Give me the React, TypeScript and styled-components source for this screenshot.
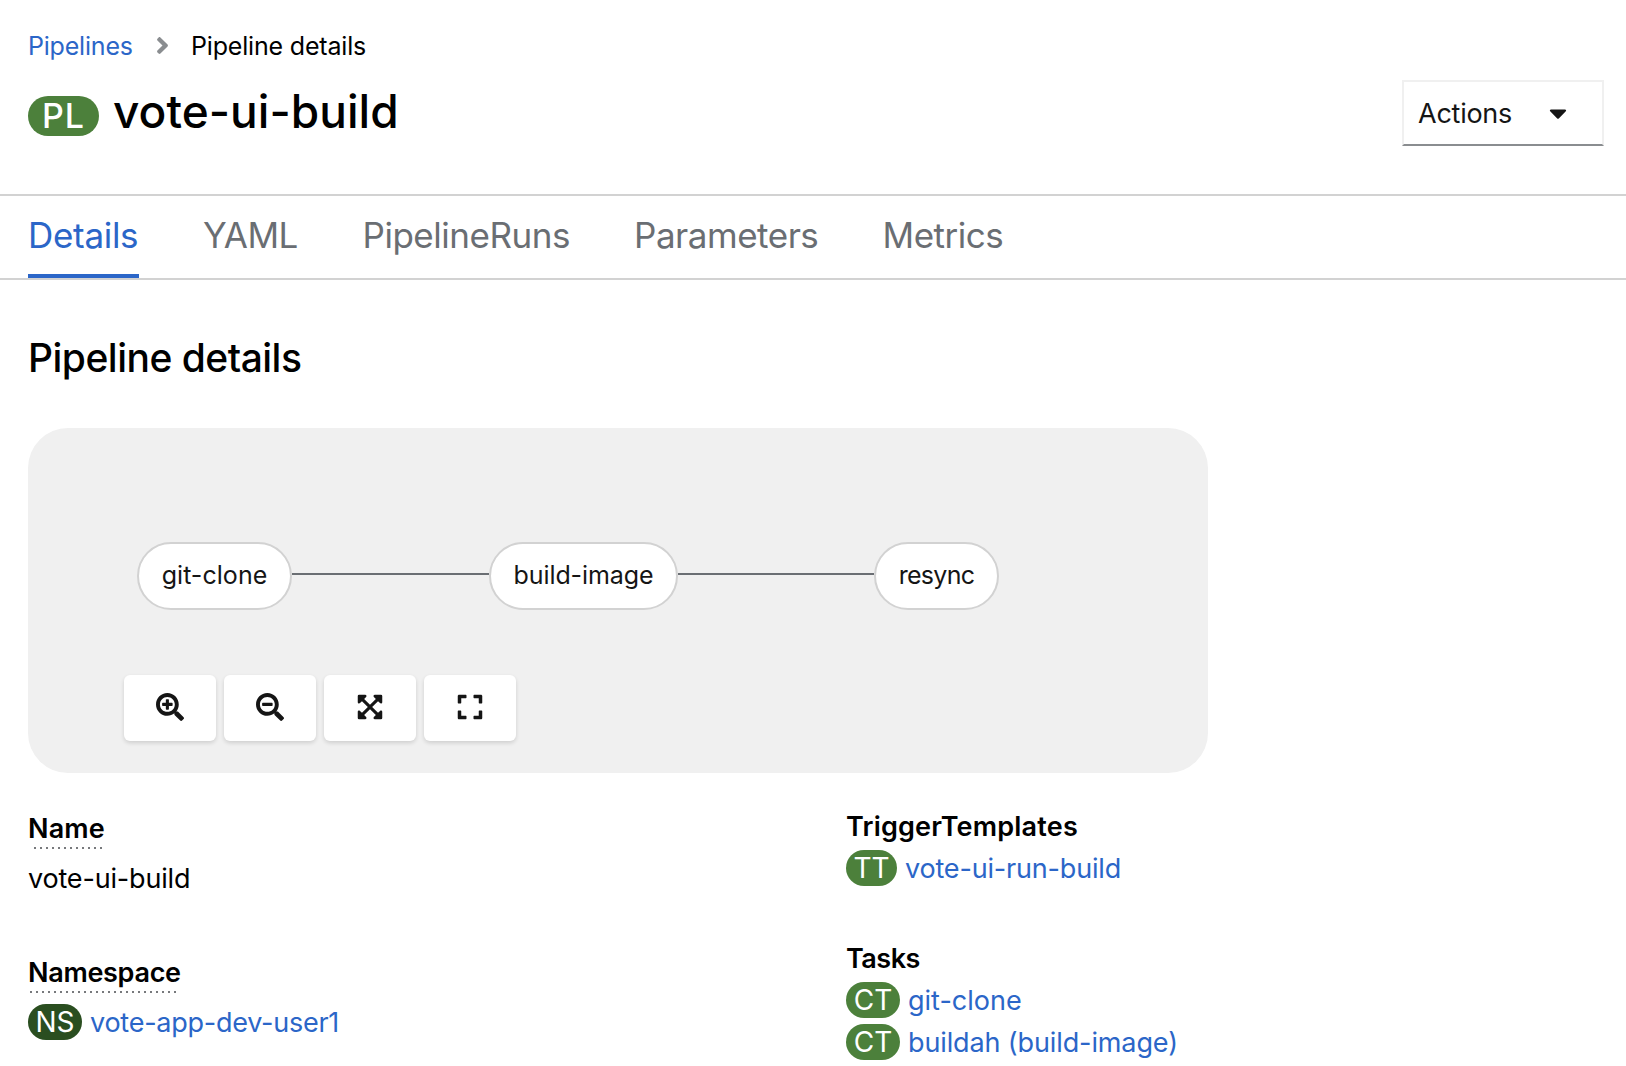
import React from "react";
import styled, { createGlobalStyle } from "styled-components";
import {
  FaAngleRight,
  FaCaretDown,
  FaExpand,
  FaExpandArrowsAlt,
  FaSearchMinus,
  FaSearchPlus,
} from "react-icons/fa";

const color = {
  link: "#2b66c8",
  text: "#000000",
  dark: "#151515",
  muted: "#6a6e73",
  line: "#d2d2d2",
  panel: "#f0f0f0",
  green: "#4c803b",
  darkGreen: "#2a4e20",
};

const GlobalStyle = createGlobalStyle`
  *, *::before, *::after { box-sizing: border-box; }
  body {
    margin: 0;
    background: #fff;
    color: ${color.text};
    font-family: Inter, "Liberation Sans", sans-serif;
    overflow: hidden;
  }
  h1, h2, dl, dt, dd, ol { margin: 0; padding: 0; }
  a { text-decoration: none; }
`;

const Page = styled.main`
  display: flex;
  flex-direction: column;
  width: 1626px;
  min-height: 1066px;
`;

const Header = styled.header`
  display: flex;
  justify-content: space-between;
  align-items: flex-start;
  height: 194px;
  padding: 27px 22px 0 28px;
`;

const HeaderMain = styled.div`
  display: flex;
  flex-direction: column;
  gap: 17px;
`;

const Breadcrumb = styled.nav`
  display: flex;
  height: 38px;
  font-size: 25px;
  line-height: 38px;
  white-space: nowrap;
`;

const BreadcrumbLink = styled.a`
  width: 105px;
  color: ${color.link};
  letter-spacing: -0.2px;
`;

const BreadcrumbDivider = styled.span`
  display: flex;
  align-items: center;
  margin: 0 15px 2px 16px;
  color: #8a8d90;
`;

const BreadcrumbCurrent = styled.span`
  letter-spacing: -0.18px;
`;

const TitleRow = styled.div`
  display: flex;
  align-items: flex-start;
  gap: 14px;
`;

const TitleBadge = styled.span`
  width: 71px;
  height: 40px;
  margin-top: 14px;
  padding-left: 14px;
  border-radius: 20px;
  background: ${color.green};
  color: #fff;
  font-size: 34px;
  font-weight: 540;
  line-height: 40px;
  letter-spacing: 1px;
`;

const Title = styled.h1`
  font-size: 46px;
  font-weight: 540;
  line-height: 58px;
  letter-spacing: 0.05px;
  white-space: nowrap;
`;

const ActionsButton = styled.button`
  display: flex;
  justify-content: space-between;
  align-items: center;
  width: 202px;
  height: 66px;
  margin-top: 53px;
  padding: 0 30px 0 14px;
  border: 2px solid #f0f0f0;
  border-bottom-color: #8a8d90;
  background: #fff;
  color: ${color.dark};
  font-family: inherit;
  font-size: 27px;
  letter-spacing: -0.25px;
`;

const Tabs = styled.nav`
  display: flex;
  gap: 64px;
  height: 86px;
  padding-left: 28px;
  border-top: 2px solid ${color.line};
  border-bottom: 2px solid ${color.line};
`;

const Tab = styled.a<{ $active?: boolean; $width: number }>`
  width: ${(p) => p.$width}px;
  height: 82px;
  border-bottom: 4px solid ${(p) => (p.$active ? color.link : "transparent")};
  color: ${(p) => (p.$active ? color.link : color.muted)};
  font-size: 35px;
  line-height: 78px;
  letter-spacing: ${(p) => (p.$active ? -0.3 : -0.47)}px;
  white-space: nowrap;
`;

const Section = styled.section`
  display: flex;
  flex-direction: column;
  padding: 54px 28px 0;
`;

const SectionTitle = styled.h2`
  font-size: 39px;
  font-weight: 540;
  line-height: 48px;
  letter-spacing: -0.51px;
`;

const Graph = styled.div`
  display: flex;
  flex-direction: column;
  gap: 65px;
  width: 1180px;
  height: 345px;
  margin-top: 46px;
  padding-top: 114px;
  border-radius: 40px;
  background: ${color.panel};
`;

const Nodes = styled.div`
  display: flex;
  padding-left: 109px;
`;

const Node = styled.div<{ $width: number; $spacing?: number }>`
  width: ${(p) => p.$width}px;
  height: 68px;
  border: 2px solid ${color.line};
  border-radius: 34px;
  background: #fff;
  color: ${color.dark};
  font-size: 25px;
  line-height: 62px;
  letter-spacing: ${(p) => p.$spacing ?? 0}px;
  text-align: center;
`;

const Edge = styled.div<{ $width: number }>`
  width: ${(p) => p.$width}px;
  height: 2px;
  margin-top: 31px;
  background: ${color.muted};
`;

const Toolbar = styled.div`
  display: flex;
  gap: 8px;
  padding-left: 96px;
`;

const ToolButton = styled.button`
  display: flex;
  justify-content: center;
  align-items: center;
  width: 92px;
  height: 66px;
  padding: 0 0 2px;
  border: 0;
  border-radius: 6px;
  background: #fff;
  box-shadow: 0 2px 4px rgba(3, 3, 3, 0.14);
  color: ${color.dark};
`;

const Details = styled.div`
  display: grid;
  grid-template-columns: 818px 1fr;
`;

const Column = styled.dl<{ $top: number; $gap: number }>`
  display: flex;
  flex-direction: column;
  gap: ${(p) => p.$gap}px;
  padding-top: ${(p) => p.$top}px;
`;

const Group = styled.div`
  display: flex;
  flex-direction: column;
  align-items: flex-start;
`;

const Term = styled.dt<{ $spacing: number }>`
  height: 41px;
  font-size: 27px;
  font-weight: 600;
  line-height: 42px;
  letter-spacing: ${(p) => p.$spacing}px;
`;

const HelpTerm = styled(Term)<{ $offset: number; $dots: number }>`
  margin-bottom: 8px;
  background: repeating-linear-gradient(
      to right,
      #77797c 0 2px,
      transparent 2px 6px
    )
    ${(p) => p.$offset}px 100% / ${(p) => p.$dots * 6}px 2px no-repeat;
`;

const Item = styled.dd<{ $spacing?: number }>`
  display: flex;
  align-items: center;
  gap: 8px;
  height: 42px;
  font-size: 27px;
  line-height: 44px;
  letter-spacing: ${(p) => p.$spacing ?? 0}px;
  white-space: nowrap;
`;

const ItemText = styled.span`
  height: 42px;
`;

const ItemLink = styled.a`
  height: 42px;
  color: ${color.link};
`;

const KindBadge = styled.span<{ $width: number; $dark?: boolean }>`
  width: ${(p) => p.$width}px;
  height: 36px;
  border-radius: 18px;
  background: ${(p) => (p.$dark ? color.darkGreen : color.green)};
  color: #fff;
  font-size: 28px;
  line-height: 37px;
  letter-spacing: 0;
  text-align: center;
`;

const tabs = [
  { label: "Details", width: 111, active: true },
  { label: "YAML", width: 95.5 },
  { label: "PipelineRuns", width: 207.5 },
  { label: "Parameters", width: 184.5 },
  { label: "Metrics", width: 120 },
];

const tools = [
  { label: "Zoom in", Icon: FaSearchPlus },
  { label: "Zoom out", Icon: FaSearchMinus },
  { label: "Fit to screen", Icon: FaExpandArrowsAlt },
  { label: "Reset view", Icon: FaExpand },
];

export default function App() {
  return (
    <Page>
      <GlobalStyle />
      <Header>
        <HeaderMain>
          <Breadcrumb>
            <BreadcrumbLink>Pipelines</BreadcrumbLink>
            <BreadcrumbDivider>
              <FaAngleRight size={27} />
            </BreadcrumbDivider>
            <BreadcrumbCurrent>Pipeline details</BreadcrumbCurrent>
          </Breadcrumb>
          <TitleRow>
            <TitleBadge>PL</TitleBadge>
            <Title>vote-ui-build</Title>
          </TitleRow>
        </HeaderMain>
        <ActionsButton>
          Actions
          <FaCaretDown size={28} />
        </ActionsButton>
      </Header>

      <Tabs>
        {tabs.map((tab) => (
          <Tab key={tab.label} $width={tab.width} $active={tab.active}>
            {tab.label}
          </Tab>
        ))}
      </Tabs>

      <Section>
        <SectionTitle>Pipeline details</SectionTitle>
        <Graph>
          <Nodes>
            <Node $width={155} $spacing={0.05}>git-clone</Node>
            <Edge $width={197} />
            <Node $width={189} $spacing={-0.1}>build-image</Node>
            <Edge $width={196} />
            <Node $width={125} $spacing={-0.7}>resync</Node>
          </Nodes>
          <Toolbar>
            {tools.map(({ label, Icon }) => (
              <ToolButton key={label} aria-label={label}>
                <Icon size={28} />
              </ToolButton>
            ))}
          </Toolbar>
        </Graph>

        <Details>
          <Column $top={35} $gap={53}>
            <Group>
              <HelpTerm $spacing={0.15} $offset={5.5} $dots={12}>Name</HelpTerm>
              <Item $spacing={-0.18}>
                <ItemText>vote-ui-build</ItemText>
              </Item>
            </Group>
            <Group>
              <HelpTerm $spacing={-0.3} $offset={2} $dots={25}>Namespace</HelpTerm>
              <Item $spacing={-0.25}>
                <KindBadge $width={54} $dark>NS</KindBadge>
                <ItemLink>vote-app-dev-user1</ItemLink>
              </Item>
            </Group>
          </Column>
          <Column $top={33} $gap={49}>
            <Group>
              <Term $spacing={0.2}>TriggerTemplates</Term>
              <Item $spacing={-0.18}>
                <KindBadge $width={51}>TT</KindBadge>
                <ItemLink>vote-ui-run-build</ItemLink>
              </Item>
            </Group>
            <Group>
              <Term $spacing={-0.5}>Tasks</Term>
              <Item>
                <KindBadge $width={54}>CT</KindBadge>
                <ItemLink>git-clone</ItemLink>
              </Item>
              <Item $spacing={-0.12}>
                <KindBadge $width={54}>CT</KindBadge>
                <ItemLink>buildah (build-image)</ItemLink>
              </Item>
            </Group>
          </Column>
        </Details>
      </Section>
    </Page>
  );
}
